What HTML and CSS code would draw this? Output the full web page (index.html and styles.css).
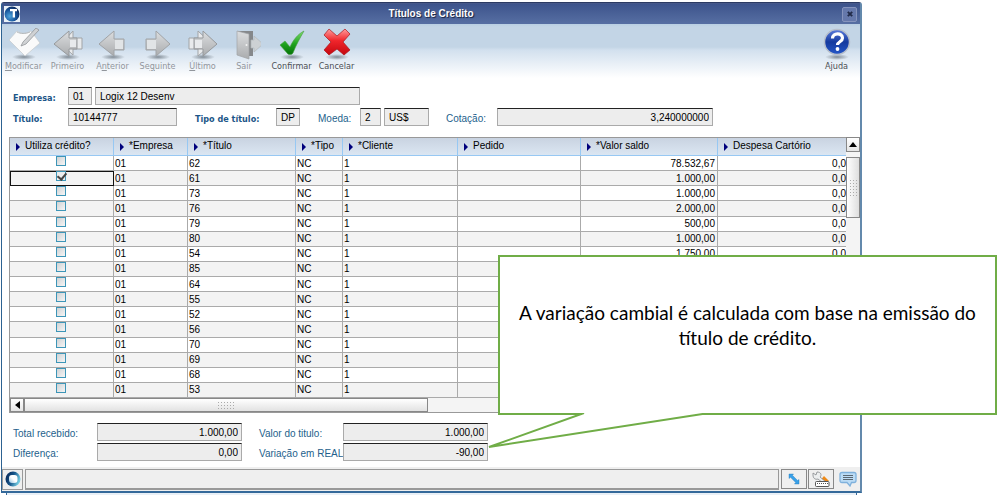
FILE: index.html
```html
<!DOCTYPE html>
<html lang="pt-BR">
<head>
<meta charset="utf-8">
<title>Títulos de Crédito</title>
<link rel="stylesheet" href="styles.css">
</head>
<body>
<main class="stage">
<section class="window">
  <header class="titlebar">
    <svg class="brand" viewBox="0 0 16 16"><defs><radialGradient id="globe" cx=".35" cy=".65" r=".7"><stop offset="0" stop-color="#4fa5dd"/><stop offset=".6" stop-color="#17549a"/><stop offset="1" stop-color="#0b2659"/></radialGradient></defs><rect width="16" height="16" fill="#e9f1f8"/><circle cx="8" cy="8" r="7.5" fill="url(#globe)"/><path d="M6 3h7v2.200h-2v6.300H8.700V5.200H6z" fill="#fff"/></svg>
    <h1>Títulos de Crédito</h1>
    <button class="close" aria-label="Fechar"><svg viewBox="0 0 6 6"><path d="M.8.8l4.400 4.400M5.200.8L.8 5.200" stroke="#222b49" stroke-width="1.900"/></svg></button>
  </header>

  <svg class="defs" width="0" height="0"><defs>
    <linearGradient id="gray" x1="0" y1="0" x2="0" y2="1"><stop offset="0" stop-color="#dcdee0"/><stop offset="1" stop-color="#aaacae"/></linearGradient>
    <linearGradient id="green" x1="0" y1="0" x2="0" y2="1"><stop offset="0" stop-color="#7ddd6c"/><stop offset=".55" stop-color="#1fa31e"/><stop offset="1" stop-color="#067309"/></linearGradient>
    <linearGradient id="red" x1="0" y1="0" x2="0" y2="1"><stop offset="0" stop-color="#ff9c9c"/><stop offset=".45" stop-color="#f0252b"/><stop offset="1" stop-color="#c40810"/></linearGradient>
    <linearGradient id="blue" x1="0" y1="0" x2="0" y2="1"><stop offset="0" stop-color="#5c7ddd"/><stop offset=".5" stop-color="#153a9e"/><stop offset="1" stop-color="#2457c8"/></linearGradient>
    <radialGradient id="shade"><stop offset="0" stop-color="#5b6670" stop-opacity=".7"/><stop offset="1" stop-color="#5b6670" stop-opacity="0"/></radialGradient>
  </defs></svg>

  <nav class="toolbar">
    <button class="tool edit" disabled><svg viewBox="0 0 34 32"><ellipse cx="17" cy="29" rx="12" ry="3" fill="url(#shade)"/><path d="M2 12L10 3c4 3 9 3 14 0l9 12-15 13z" fill="#fafafa" stroke="#c6cacd" stroke-width=".7"/><path d="M10 4c4 2 8 2 13 0" fill="none" stroke="#b6babd"/><path d="M16 14L29 0l3 2-13 14-5 2z" fill="#d0d2d4" stroke="#929699" stroke-width=".8"/></svg><span><u>M</u>odificar</span></button>
    <button class="tool" disabled><svg viewBox="0 0 34 32"><ellipse cx="17" cy="29" rx="12" ry="3" fill="url(#shade)"/><path d="M22 3v7h9v11h-9v6L10 16z" fill="#e8eaec" stroke="#a1a4a7"/><path d="M18 3v7h8v11h-8v7L3 16z" fill="url(#gray)" stroke="#96999c"/><path d="M19 12h6v7h-6z" fill="#e8eaec"/></svg><span>Primeiro</span></button>
    <button class="tool" disabled><svg viewBox="0 0 34 32"><ellipse cx="17" cy="29" rx="12" ry="3" fill="url(#shade)"/><path d="M18 3v8h10v11H18v6L3 16z" fill="url(#gray)" stroke="#a0a3a6"/><path d="M19 12h8v9h-8z" fill="#e1e4e6"/></svg><span>A<u>n</u>terior</span></button>
    <button class="tool" disabled><svg viewBox="0 0 34 32"><ellipse cx="17" cy="29" rx="12" ry="3" fill="url(#shade)"/><path d="M15 3v8H5v11h10v6l14-12z" fill="url(#gray)" stroke="#a0a3a6"/><path d="M6 12h9v9H6z" fill="#e1e4e6"/></svg><span>Se<u>g</u>uinte</span></button>
    <button class="tool" disabled><svg viewBox="0 0 34 32"><ellipse cx="17" cy="29" rx="12" ry="3" fill="url(#shade)"/><path d="M12 3v7H3v11h9v7l14-12z" fill="#e8eaec" stroke="#a1a4a7"/><path d="M17 3v7H8v11h9v7l14-12z" fill="url(#gray)" stroke="#96999c"/><path d="M9 12h7v8H9z" fill="#e8eaec"/></svg><span><u>Ú</u>ltimo</span></button>
    <button class="tool exit" disabled><svg viewBox="0 0 34 32"><path d="M10 3h16v25H14z" fill="#85888b"/><path d="M24 12h3V8l9 8-9 8v-4h-3z" fill="#cdd1d4" stroke="#b3b7ba" stroke-width=".7"/><path d="M10 3l12 3v25l-12-4z" fill="url(#gray)" stroke="#a0a3a6" stroke-width=".7"/><circle cx="19.500" cy="17" r="1" fill="#f4f4f4"/></svg><span>Sair</span></button>
    <button class="tool confirm"><svg viewBox="0 0 34 32"><ellipse cx="17" cy="29" rx="12" ry="3" fill="url(#shade)"/><path d="M5 17l5-4 5 6C18 12 23 6 29 3c-4 7-8 14-11 22-1 2-5 2-6 0z" fill="url(#green)" stroke="#4a9e44" stroke-width=".6"/></svg><span>Confirmar</span></button>
    <button class="tool"><svg viewBox="0 0 34 32"><ellipse cx="17" cy="29" rx="12" ry="3" fill="url(#shade)"/><path d="M9 1l8 7 8-7 5 5-7 8 7 8-6 5-7-6-8 6-5-5 7-8-7-7z" fill="url(#red)" stroke="#a9151b" stroke-width=".7"/></svg><span>Cancelar</span></button>
    <button class="tool help"><svg viewBox="0 0 34 32"><ellipse cx="17" cy="29" rx="12" ry="3" fill="url(#shade)"/><circle cx="17" cy="14" r="12.500" fill="url(#blue)" stroke="#b7bfcb" stroke-width="1.500"/><path d="M12.500 10.500c0-6 10-6 10-.5 0 4-5 3.500-5 7" fill="none" stroke="#fff" stroke-width="3.200"/><circle cx="17.500" cy="21" r="1.900" fill="#fff"/></svg><span>Ajuda</span></button>
  </nav>

  <form class="fields">
    <div class="line">
      <label class="strong first" for="emp">Empresa:</label>
      <input id="emp" class="w24" value="01" readonly>
      <input class="w265" aria-label="Nome da empresa" value="Logix 12 Desenv" readonly>
    </div>
    <div class="line">
      <label class="strong first" for="tit">Título:</label>
      <input id="tit" class="w109" value="10144777" readonly>
      <label class="strong type" for="tipo">Tipo de título:</label>
      <input id="tipo" class="w24" value="DP" readonly>
      <label class="currency" for="moeda">Moeda:</label>
      <input id="moeda" class="w21" value="2" readonly>
      <input class="w45" aria-label="Nome da moeda" value="US$" readonly>
      <label class="rate" for="cot">Cotação:</label>
      <input id="cot" class="w216 num" value="3,240000000" readonly>
    </div>
  </form>

  <div class="grid">
    <div class="grid-main">
      <table>
        <colgroup><col class="c1"><col class="c2"><col class="c3"><col class="c4"><col class="c5"><col class="c6"><col class="c7"><col></colgroup>
        <thead><tr><th>Utiliza crédito?</th><th>*Empresa</th><th>*Título</th><th>*Tipo</th><th>*Cliente</th><th>Pedido</th><th>*Valor saldo</th><th>Despesa Cartório</th></tr></thead>
        <tbody>
          <tr><td><input type="checkbox" aria-label="Título 62"></td><td>01</td><td>62</td><td>NC</td><td>1</td><td></td><td>78.532,67</td><td>0,0</td></tr>
          <tr><td class="focus"><input type="checkbox" aria-label="Título 61" checked></td><td>01</td><td>61</td><td>NC</td><td>1</td><td></td><td>1.000,00</td><td>0,0</td></tr>
          <tr><td><input type="checkbox" aria-label="Título 73"></td><td>01</td><td>73</td><td>NC</td><td>1</td><td></td><td>1.000,00</td><td>0,0</td></tr>
          <tr><td><input type="checkbox" aria-label="Título 76"></td><td>01</td><td>76</td><td>NC</td><td>1</td><td></td><td>2.000,00</td><td>0,0</td></tr>
          <tr><td><input type="checkbox" aria-label="Título 79"></td><td>01</td><td>79</td><td>NC</td><td>1</td><td></td><td>500,00</td><td>0,0</td></tr>
          <tr><td><input type="checkbox" aria-label="Título 80"></td><td>01</td><td>80</td><td>NC</td><td>1</td><td></td><td>1.000,00</td><td>0,0</td></tr>
          <tr><td><input type="checkbox" aria-label="Título 54"></td><td>01</td><td>54</td><td>NC</td><td>1</td><td></td><td>1.750,00</td><td>0,0</td></tr>
          <tr><td><input type="checkbox" aria-label="Título 85"></td><td>01</td><td>85</td><td>NC</td><td>1</td><td></td><td></td><td></td></tr>
          <tr><td><input type="checkbox" aria-label="Título 64"></td><td>01</td><td>64</td><td>NC</td><td>1</td><td></td><td></td><td></td></tr>
          <tr><td><input type="checkbox" aria-label="Título 55"></td><td>01</td><td>55</td><td>NC</td><td>1</td><td></td><td></td><td></td></tr>
          <tr><td><input type="checkbox" aria-label="Título 52"></td><td>01</td><td>52</td><td>NC</td><td>1</td><td></td><td></td><td></td></tr>
          <tr><td><input type="checkbox" aria-label="Título 56"></td><td>01</td><td>56</td><td>NC</td><td>1</td><td></td><td></td><td></td></tr>
          <tr><td><input type="checkbox" aria-label="Título 70"></td><td>01</td><td>70</td><td>NC</td><td>1</td><td></td><td></td><td></td></tr>
          <tr><td><input type="checkbox" aria-label="Título 69"></td><td>01</td><td>69</td><td>NC</td><td>1</td><td></td><td></td><td></td></tr>
          <tr><td><input type="checkbox" aria-label="Título 68"></td><td>01</td><td>68</td><td>NC</td><td>1</td><td></td><td></td><td></td></tr>
          <tr><td><input type="checkbox" aria-label="Título 53"></td><td>01</td><td>53</td><td>NC</td><td>1</td><td></td><td></td><td></td></tr>
        </tbody>
      </table>
      <div class="hscroll">
        <button class="arrow" aria-label="Rolar para a esquerda"><svg viewBox="0 0 5 8"><path d="M5 0v8L0 4z"/></svg></button>
        <div class="thumb"><i class="grip"></i></div>
      </div>
    </div>
    <div class="vscroll">
      <button class="arrow" aria-label="Rolar para cima"><svg viewBox="0 0 8 5"><path d="M0 5h8L4 0z"/></svg></button>
      <div class="thumb"><i class="grip"></i></div>
    </div>
  </div>

  <form class="totals">
    <label for="rec">Total recebido:</label><input id="rec" class="num" value="1.000,00" readonly>
    <label for="val">Valor do titulo:</label><input id="val" class="num" value="1.000,00" readonly>
    <label for="dif">Diferença:</label><input id="dif" class="num" value="0,00" readonly>
    <label for="var">Variação em REAL</label><input id="var" class="num" value="-90,00" readonly>
  </form>

  <footer class="status">
    <button class="orb" aria-label="Logix"><svg viewBox="0 0 16 16"><defs><linearGradient id="ring" x2="1" y2=".4"><stop offset="0" stop-color="#061d4c"/><stop offset=".55" stop-color="#17578c"/><stop offset="1" stop-color="#74cbe0"/></linearGradient><linearGradient id="hole" x1="0" y1="1" x2="1" y2="0"><stop offset="0" stop-color="#8fc0de"/><stop offset=".5" stop-color="#fff"/></linearGradient></defs><circle cx="8" cy="8" r="7.500" fill="url(#ring)"/><rect x="4" y="4" width="8.500" height="8" rx="3" fill="url(#hole)"/></svg></button>
    <div class="message"></div>
    <button class="box" aria-label="Redimensionar"><svg viewBox="0 0 16 16"><path d="M3 3h4.500L6.400 4.300l5.200 5.200L13 8.500V13H8.500l1.200-1.500-5.200-5.200L3 7.500z" fill="#38a0e8" stroke="#2478b8" stroke-width=".4"/></svg></button>
    <button class="box" aria-label="Ferramentas"><svg viewBox="0 0 18 16"><path d="M8 10l4-5 5 5z" fill="#f08a16"/><path d="M1 2l3 2 1-3c4 0 5 3 3 5l6 5-2 2-6-5C3 9 1 7 1 4z" fill="#eceeef" stroke="#85898d" stroke-width=".8"/><rect x="3.500" y="10.500" width="13.500" height="5" rx="1" fill="#fff" stroke="#444" stroke-width=".9"/><path d="M5 12.500h11" stroke="#555" stroke-dasharray="1 1"/></svg></button>
    <button class="chat" aria-label="Mensagens"><svg viewBox="0 0 18 16"><path d="M3 1.500h12q2 0 2 2v6q0 2-2 2h-2.500L11 15l-3-3.500H3q-2 0-2-2v-6q0-2 2-2z" fill="#bcdcf5" stroke="#7fb1dc" stroke-width="1.300"/><path d="M4 4.500h10M4 6.500h10M4 8.500h10" stroke="#5b6873"/></svg></button>
  </footer>
</section>
<div class="behind"></div>

<aside class="callout">
  <p>A variação cambial é calculada com base na emissão do título de crédito.</p>
  <svg class="tail" viewBox="0 0 230 36"><path d="M97 0L2 34L222 0" fill="#fff" stroke="#70ad47" stroke-width="2"/></svg>
</aside>
</main>
</body>
</html>
```
FILE: styles.css
```css
* { box-sizing: border-box; }
body { margin: 0; background: #fff; font: 10px/12px "Liberation Sans", Arial, sans-serif; color: #000; }
button, input { font: inherit; color: inherit; margin: 0; padding: 0; border: 0; }
button { background: none; }
svg { display: block; }
.defs { position: absolute; }
.stage { position: relative; padding: 2px 141px 0 1px; overflow: hidden; }
.window { border: 1px solid #2d6291; border-right: 2px solid #6389ac; border-bottom: 2px solid #34699a; border-top-color: #2b3a63; border-radius: 3px 3px 0 0; background: #fff; }

.titlebar { display: flex; align-items: center; height: 21px; padding: 0 3px 0 2px; background: linear-gradient(#3d548c, #576fa3); border-top: 1px solid #46588a; }
.brand { width: 16px; height: 16px; }
.titlebar h1 { flex: 1; margin: 0; text-align: center; font-size: 10px; color: #fff; text-shadow: 1px 1px 1px #17213f; }
.close { display: grid; place-items: center; width: 15px; height: 15px; border: 1px solid #8694bd; border-radius: 2px; background: #6578ab; }
.close svg { width: 6px; height: 6px; }

.toolbar { display: flex; height: 63px; padding: 4px 1px 0 0; background: linear-gradient(#b9cfe3 0, #c3d5e6 3px, #c3d5e6 23px, #d2e0ee 26px, #fff 54px); }
.tool { display: flex; flex-direction: column; align-items: center; width: 45px; height: 46px; font: 9px/12px "DejaVu Sans Condensed", "DejaVu Sans", sans-serif; color: #4b4f55; }
.tool:disabled { color: #92969c; }
.tool svg { width: 34px; height: 32px; }
.tool.edit { width: 43px; }
.tool.exit { width: 38px; }
.tool.confirm { margin-left: 6px; }
.tool.help { margin-left: auto; }

.fields { display: grid; gap: 3px; padding: 0 11px; }
.line { display: flex; gap: 3px; }
label { font-size: 10px; line-height: 12px; padding-top: 5px; color: #245f8c; white-space: nowrap; }
label.strong { font: bold 9px/12px "DejaVu Sans Condensed", "DejaVu Sans", sans-serif; color: #1c5688; }
.first { width: 52px; }
.type { width: 78px; margin-left: 15px; }
.currency { width: 39px; margin-left: 15px; }
.rate { width: 48px; margin-left: 14px; }
.fields input, .totals input { height: 18px; min-width: 0; padding: 1px 4px 0; background: #ededed; border: 1px solid #aaa; border-top: 1px solid #222; outline: 0; }
.fields input.num, .totals input.num { text-align: right; padding-right: 3px; }
.fields .w21 { width: 21px; }
.fields .w24 { width: 24px; }
.fields .w45 { width: 45px; }
.fields .w109 { width: 109px; }
.fields .w216 { width: 216px; }
.fields .w265 { width: 265px; }

.grid { display: flex; margin: 11px 0 0 7px; }
.grid-main { flex: 1; min-width: 0; }
table { width: 100%; height: 261px; table-layout: fixed; border-collapse: separate; border-spacing: 0; border-top: 1px solid #999; border-left: 1px solid #999; }
.c1 { width: 104px; }
.c2 { width: 74px; }
.c3 { width: 108px; }
.c4 { width: 47px; }
.c5 { width: 115px; }
.c6 { width: 123px; }
.c7 { width: 137px; }
th { height: 18px; padding: 0 0 1px 6px; text-align: left; font-weight: normal; white-space: nowrap; background: linear-gradient(#c9d3e1, #dbe6f2); border-right: 1px solid #97c8f3; border-bottom: 1px solid #97c8f3; }
th::before { content: ""; display: inline-block; margin-right: 5px; vertical-align: -2px; border: 4px solid transparent; border-left-color: #00007c; border-right: 0; }
th:last-child, td:last-child { border-right: 0; }
td { height: 15px; padding: 1px 1px 0; line-height: 12px; border-right: 1px solid #aaa; border-bottom: 1px solid #aaa; }
tbody tr:nth-child(even) { background: #f3f3f3; }
td:nth-child(7) { text-align: right; padding-right: 2px; }
td:last-child { text-align: right; padding-right: 0; }
td:first-child { text-align: center; padding: 0 2px 0 0; vertical-align: top; }
td.focus { outline: 1px solid #111; outline-offset: -1px; }
td input { appearance: none; display: block; width: 10px; height: 10px; margin: 0 auto; border: 1px solid #3d95b7; background: linear-gradient(135deg, #cfd2d4, #f6f6f6); }
td input:checked { background: #eee; position: relative; }
td input:checked::after { content: ""; position: absolute; left: 2px; top: -1px; width: 4px; height: 7px; border: solid #444; border-width: 0 2px 2px 0; transform: rotate(40deg); }

.arrow { display: grid; place-items: center; border: 1px solid #888; background: linear-gradient(#fff, #e4e4e4); }
.thumb { display: grid; place-items: center; border: 1px solid #888; background: #eee; }
.grip { background: radial-gradient(circle, #aaa 35%, transparent 45%) 0 0 / 3px 3px; }
.hscroll { display: flex; height: 15px; border-bottom: 1px solid #999; border-left: 1px solid #999; background: #f4f4f4; }
.hscroll .arrow { width: 14px; }
.hscroll .arrow svg { width: 5px; height: 8px; }
.hscroll .thumb { width: 404px; background: linear-gradient(#fff, #e2e2e2); }
.hscroll .grip { width: 18px; height: 9px; }
.vscroll { width: 14px; background: #f4f4f4; }
.vscroll .arrow { width: 14px; height: 15px; }
.vscroll .arrow svg { width: 8px; height: 5px; }
.vscroll .thumb { height: 61px; margin-top: 5px; background: linear-gradient(90deg, #fff, #dedede); }
.vscroll .grip { width: 9px; height: 18px; }

.totals { display: grid; grid-template-columns: 84px 145px 101px 145px; row-gap: 2px; padding: 10px 11px 6px; }
.totals label:nth-of-type(even) { padding-left: 17px; }

.status { display: flex; align-items: center; height: 24px; padding-right: 3px; background: #efefef; }
.orb { display: grid; place-items: center; width: 21px; height: 21px; border: 1px solid #999; }
.orb svg { width: 16px; height: 16px; }
.message { flex: 1; height: 21px; margin: 0 2px; border: 1px solid #999; border-bottom-width: 2px; }
.box { display: grid; place-items: center; width: 26px; height: 20px; margin-right: 1px; border: 1px solid #888; }
.box svg { width: 18px; height: 16px; }
.chat { margin: 0 0 0 4px; }
.chat svg { width: 18px; height: 16px; }
.behind { height: 2px; margin: 0 5px; border: 1px solid #34699a; border-width: 0 1px; background: #e9f0f7; }

.callout { position: absolute; left: 498px; right: 6px; top: 255px; height: 160px; padding: 43px 16px 0; border: 2px solid #70ad47; background: #fff; color: #000; text-align: center; }
.callout p { margin: 0; font: 19px/25px Lato, sans-serif; }
.tail { position: absolute; left: -13px; top: 156px; width: 230px; height: 36px; }
```
